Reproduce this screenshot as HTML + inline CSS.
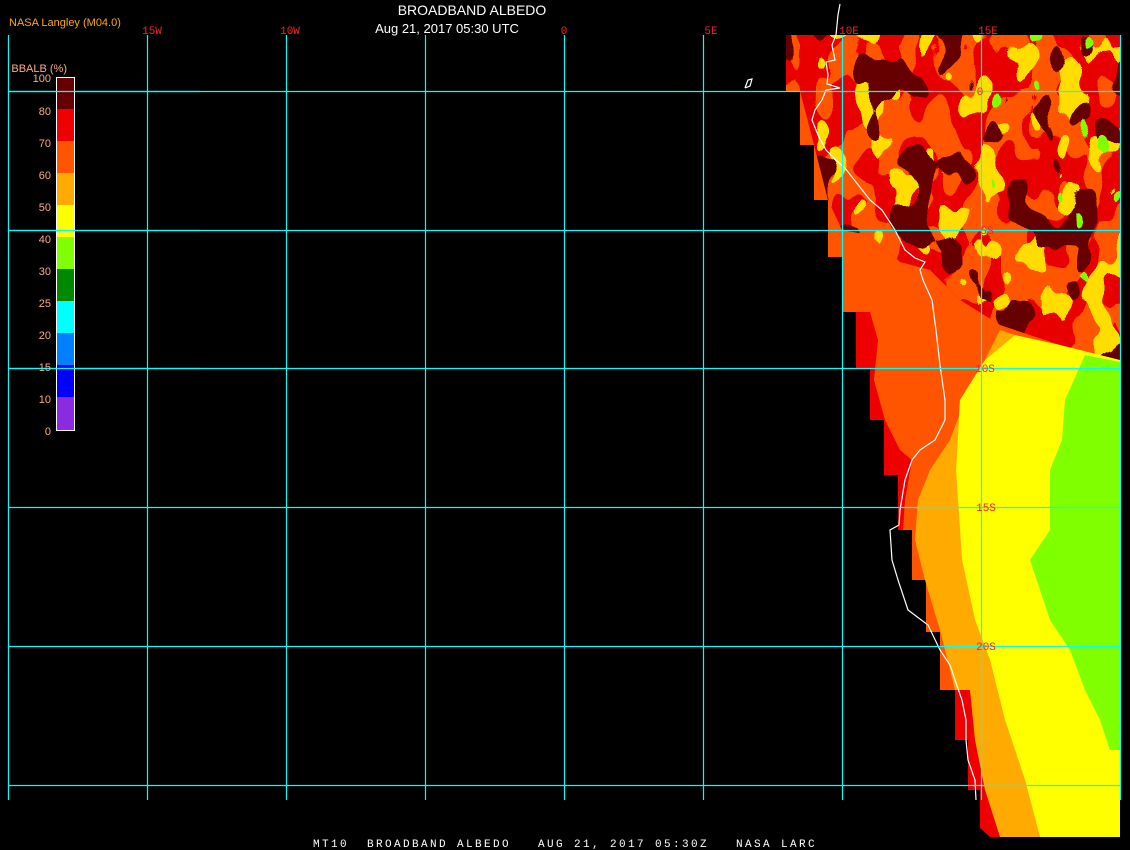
<!DOCTYPE html>
<html><head><meta charset="utf-8"><style>
html,body{margin:0;padding:0;background:#000;}
body{width:1130px;height:850px;overflow:hidden;position:relative;font-family:"Liberation Sans",sans-serif;}
svg{position:absolute;left:0;top:0;}
</style></head><body>
<svg width="1130" height="850" viewBox="0 0 1130 850">
<defs>
<filter id="fd" x="0" y="0" width="1" height="1" color-interpolation-filters="sRGB">
<feTurbulence type="fractalNoise" baseFrequency="0.03 0.02" numOctaves="2" seed="5" result="t"/>
<feColorMatrix in="t" type="matrix" values="0 0 0 0 0  0 0 0 0 0  0 0 0 0 0  1 0 0 0 0" result="a"/>
<feComponentTransfer in="a" result="m"><feFuncA type="discrete" tableValues="0 0 0 0 0 0 1 1 1 1"/></feComponentTransfer>
<feFlood flood-color="#660000"/><feComposite in2="m" operator="in"/>
</filter>
<filter id="fo" x="0" y="0" width="1" height="1" color-interpolation-filters="sRGB">
<feTurbulence type="fractalNoise" baseFrequency="0.03 0.02" numOctaves="2" seed="7" result="t"/>
<feColorMatrix in="t" type="matrix" values="0 0 0 0 0  0 0 0 0 0  0 0 0 0 0  0 0 1 0 0" result="a"/>
<feComponentTransfer in="a" result="m"><feFuncA type="discrete" tableValues="0 0 0 0 0 1 1 1 1 1"/></feComponentTransfer>
<feFlood flood-color="#ff5500"/><feComposite in2="m" operator="in"/>
</filter>
<filter id="fy" x="0" y="0" width="1" height="1" color-interpolation-filters="sRGB">
<feTurbulence type="fractalNoise" baseFrequency="0.035 0.025" numOctaves="2" seed="11" result="t"/>
<feColorMatrix in="t" type="matrix" values="0 0 0 0 0  0 0 0 0 0  0 0 0 0 0  0 1 0 0 0" result="a"/>
<feComponentTransfer in="a" result="m"><feFuncA type="discrete" tableValues="0 0 0 0 0 0 1 1 1 1"/></feComponentTransfer>
<feFlood flood-color="#ffdd00"/><feComposite in2="m" operator="in"/>
</filter>
<filter id="fg" x="0" y="0" width="1" height="1" color-interpolation-filters="sRGB">
<feTurbulence type="fractalNoise" baseFrequency="0.04 0.025" numOctaves="2" seed="23" result="t"/>
<feColorMatrix in="t" type="matrix" values="0 0 0 0 0  0 0 0 0 0  0 0 0 0 0  0 0 1 0 0" result="a"/>
<feComponentTransfer in="a" result="m"><feFuncA type="discrete" tableValues="0 0 0 0 0 0 0 1 1 1"/></feComponentTransfer>
<feFlood flood-color="#80ff00"/><feComposite in2="m" operator="in"/>
</filter>
<clipPath id="north"><polygon points="786,35 1120,35 1120,365 1060,345 1000,325 960,300 930,270 900,262 870,235 842,230 828,200 814,145 800,91 786,91"/></clipPath>
<clipPath id="ne"><polygon points="990,35 1120,35 1120,310 1060,260 1000,240 980,100"/></clipPath>
</defs>
<polygon fill="#ff5500" points="786,35 1120,35 1120,837 1000,837 980,828 980,790 968,790 968,740 955,740 955,690 940,690 940,632 926,632 926,580 912,580 912,530 898,530 898,475 884,475 884,420 870,420 870,368 856,368 856,312 842,312 842,257 828,257 828,200 814,200 814,145 800,145 800,91 786,91"/>
<g clip-path="url(#north)">
<rect x="786" y="35" width="334" height="330" fill="#e80000"/>
<rect x="786" y="35" width="334" height="330" filter="url(#fo)"/>
<rect x="786" y="35" width="334" height="330" filter="url(#fy)"/>
<rect x="786" y="35" width="334" height="330" filter="url(#fd)"/>
</g>
<g clip-path="url(#ne)">
<rect x="990" y="35" width="130" height="275" filter="url(#fg)"/>
</g>
<polygon fill="#ffaa00" points="1000,330 985,360 965,400 950,440 930,470 918,500 915,540 925,580 940,630 955,690 970,730 985,790 1000,837 1040,837 1025,780 1005,720 990,660 975,620 962,560 956,470 960,400 985,360 1015,335"/>
<polygon fill="#ffff00" points="1015,335 1060,345 1120,360 1120,837 1040,837 1025,780 1005,720 990,660 975,620 962,560 956,470 960,400 985,360"/>
<polygon fill="#80ff00" points="1085,355 1120,362 1120,750 1110,750 1100,720 1085,690 1070,650 1050,620 1030,560 1050,530 1050,470 1062,440 1065,400"/>
<polygon fill="#ee0000" points="856,312 870,312 878,340 874,380 885,420 900,450 912,460 905,500 903,530 898,530 898,475 884,475 884,420 870,420 870,368 856,368"/>
<polygon fill="#ee0000" points="955,690 970,690 975,740 985,790 1000,837 990,837 980,828 980,790 968,790 968,740 955,740"/>
<polyline fill="none" stroke="#fff" stroke-width="1.2" points="840,4 838,15 836,35 832,45 835,60 826,62 828,75 827,84 840,88 826,90 822,100 815,110 812,120 818,135 826,150 838,162 845,168 870,200 882,210 895,230 905,250 915,258 925,262 920,270 923,280 932,300 936,330 940,365 945,400 945,420 935,440 920,450 912,460 905,480 900,510 899,525 890,530 892,560 898,580 908,610 928,625 940,650 950,665 955,680 962,700 966,720 966,740 968,760 975,780 976,800"/>
<polyline fill="none" stroke="#fff" stroke-width="1.2" points="745,88 748,80 752,79 750,86 745,88"/>
<g stroke="#00ffff" stroke-width="1.2">
<line x1="8.5" y1="35" x2="8.5" y2="800"/>
<line x1="147.5" y1="35" x2="147.5" y2="800"/>
<line x1="286.5" y1="35" x2="286.5" y2="800"/>
<line x1="425.5" y1="35" x2="425.5" y2="800"/>
<line x1="564.5" y1="35" x2="564.5" y2="800"/>
<line x1="703.5" y1="35" x2="703.5" y2="800"/>
<line x1="842.5" y1="35" x2="842.5" y2="800"/>
<line x1="981.5" y1="35" x2="981.5" y2="800"/>
<line x1="1120.5" y1="35" x2="1120.5" y2="800"/>
<line x1="8" y1="91.5" x2="1120" y2="91.5"/>
<line x1="8" y1="230.5" x2="1120" y2="230.5"/>
<line x1="8" y1="368.5" x2="1120" y2="368.5"/>
<line x1="8" y1="507.5" x2="1120" y2="507.5"/>
<line x1="8" y1="646.5" x2="1120" y2="646.5"/>
<line x1="8" y1="785.5" x2="1120" y2="785.5"/>
</g>
<g stroke="none">
<rect x="57" y="77" width="17" height="32" fill="#660000"/>
<rect x="57" y="109" width="17" height="32" fill="#ee0000"/>
<rect x="57" y="141" width="17" height="32" fill="#ff5500"/>
<rect x="57" y="173" width="17" height="32" fill="#ffaa00"/>
<rect x="57" y="205" width="17" height="32" fill="#ffff00"/>
<rect x="57" y="237" width="17" height="32" fill="#80ff00"/>
<rect x="57" y="269" width="17" height="32" fill="#008800"/>
<rect x="57" y="301" width="17" height="32" fill="#00ffff"/>
<rect x="57" y="333" width="17" height="32" fill="#0080ff"/>
<rect x="57" y="365" width="17" height="32" fill="#0000ff"/>
<rect x="57" y="397" width="17" height="33" fill="#8a2be2"/>
</g>
<rect x="56.5" y="77.5" width="18" height="353" fill="none" stroke="#fff"/>
<line x1="8" y1="91.5" x2="200" y2="91.5" stroke="#00ffff" stroke-width="1.2"/>
<line x1="8" y1="230.5" x2="200" y2="230.5" stroke="#00ffff" stroke-width="1.2"/>
<line x1="8" y1="368.5" x2="200" y2="368.5" stroke="#00ffff" stroke-width="1.2"/>
<g font-family="Liberation Sans, sans-serif" font-size="11" fill="#ffaa80" text-anchor="end">
<text x="51" y="82">100</text><text x="51" y="115">80</text><text x="51" y="147">70</text>
<text x="51" y="179">60</text><text x="51" y="211">50</text><text x="51" y="243">40</text>
<text x="51" y="275">30</text><text x="51" y="307">25</text><text x="51" y="339">20</text>
<text x="51" y="371">15</text><text x="51" y="403">10</text><text x="51" y="435">0</text>
<text x="67" y="72">BBALB (%)</text>
</g>
<text x="9" y="26" font-family="Liberation Sans, sans-serif" font-size="11" fill="#ffaa00">NASA Langley (M04.0)</text>
<text x="472" y="15" font-family="Liberation Sans, sans-serif" font-size="14" fill="#fff" text-anchor="middle">BROADBAND ALBEDO</text>
<text x="447" y="33" font-family="Liberation Sans, sans-serif" font-size="13" fill="#fff" text-anchor="middle">Aug 21, 2017 05:30 UTC</text>
<g font-family="Liberation Mono, monospace" font-size="11" fill="#ff2020" text-anchor="middle">
<text x="152" y="34">15W</text><text x="290" y="34">10W</text><text x="564" y="34">0</text>
<text x="711" y="34">5E</text><text x="849" y="34">10E</text><text x="988" y="34">15E</text>
<text x="980" y="95">0</text><text x="987" y="234">5S</text><text x="985" y="372">10S</text>
<text x="986" y="511">15S</text><text x="986" y="650">20S</text>
</g>
<text x="313" y="847" font-family="Liberation Mono, monospace" font-size="11" fill="#fff" letter-spacing="2.4" xml:space="preserve">MT10  BROADBAND ALBEDO   AUG 21, 2017 05:30Z   NASA LARC</text>
</svg>
</body></html>
